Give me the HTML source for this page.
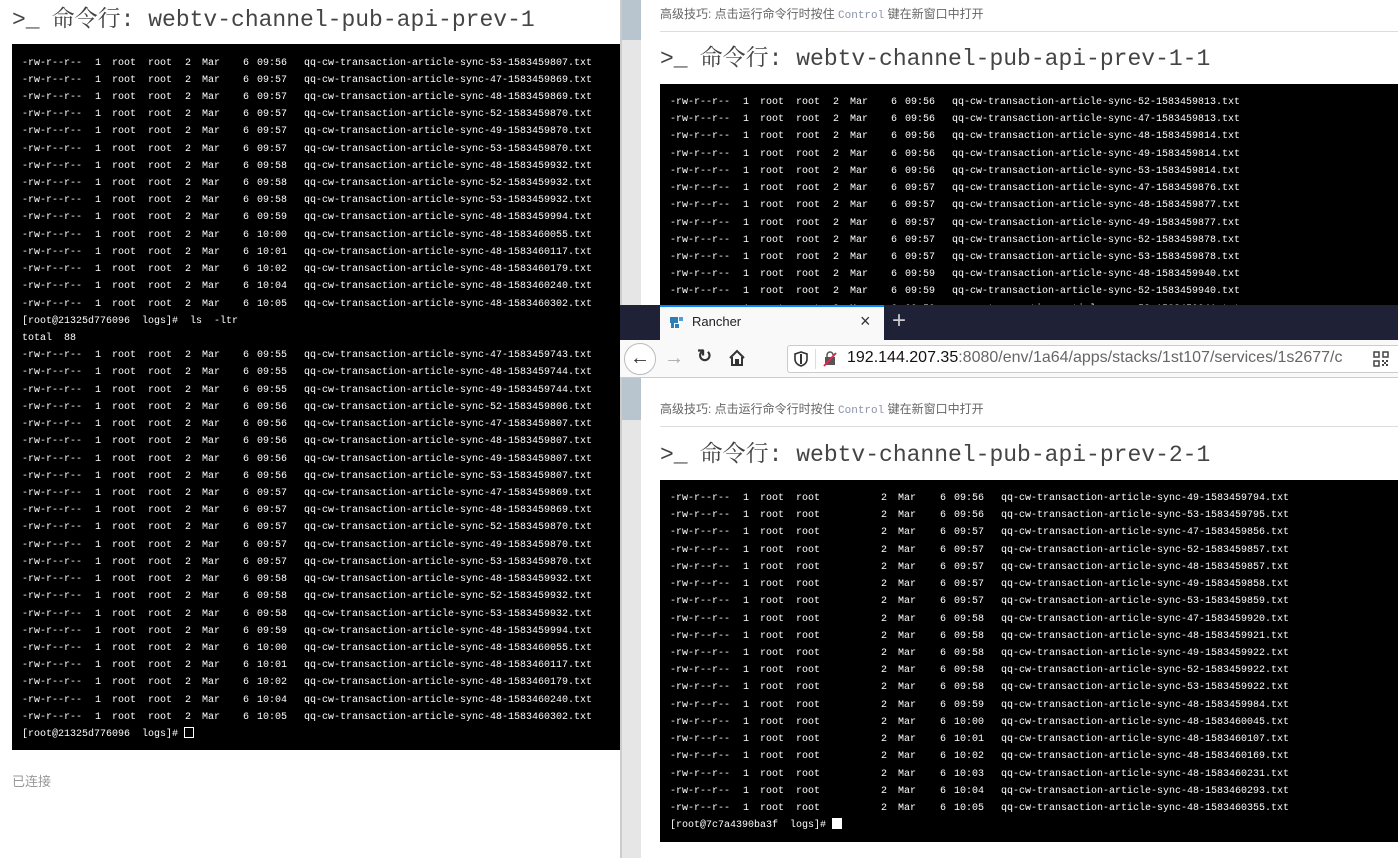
<!DOCTYPE html>
<html><head><meta charset="utf-8">
<style>
*{margin:0;padding:0;box-sizing:border-box}
body{width:1398px;height:858px;overflow:hidden;background:#fff;position:relative;font-family:"Liberation Sans","Noto Sans CJK SC",sans-serif}
.title{position:absolute;font-family:"Liberation Mono","Noto Serif CJK SC",monospace;font-size:23px;color:#444;white-space:nowrap;line-height:30px}
.title b{font-weight:normal;margin-right:12px}
.term{position:absolute;background:#000;overflow:hidden;color:#fff;font-family:"Liberation Mono",monospace;font-size:10px}
.r{position:relative;height:17.22px;line-height:17.22px;white-space:pre}
.r span{position:absolute;top:0}
.a{left:10px}.b{left:83px}.c{left:100px}.d{left:136px}.e{left:173px}.f{left:190px}.g{left:231px}.h{left:245px}.i{left:292px}
.w .e{left:221px}.w .f{left:238px}.w .g{left:280px}.w .h{left:294px}.w .i{left:341px}
.p{padding-left:10px}
.cur{display:inline-block;width:10px;height:11px;border:1px solid #fff;vertical-align:-2px;margin-left:6px}
.cur.f2{background:#fff}
.tip{position:absolute;font-size:12px;color:#666;white-space:nowrap}
.tip code{font-family:"Liberation Mono",monospace;color:#8a94a8;font-size:11px}
</style></head><body>

<!-- left window -->
<div class="title" style="left:12px;top:5px"><b>&gt;_</b>命令行: webtv-channel-pub-api-prev-1</div>
<div class="term" style="left:12px;top:44px;width:608px;height:706px;padding-top:10.5px">
<div class="r"><span class="a">-rw-r--r--</span><span class="b">1</span><span class="c">root</span><span class="d">root</span><span class="e">2</span><span class="f">Mar</span><span class="g">6</span><span class="h">09:56</span><span class="i">qq-cw-transaction-article-sync-53-1583459807.txt</span></div>
<div class="r"><span class="a">-rw-r--r--</span><span class="b">1</span><span class="c">root</span><span class="d">root</span><span class="e">2</span><span class="f">Mar</span><span class="g">6</span><span class="h">09:57</span><span class="i">qq-cw-transaction-article-sync-47-1583459869.txt</span></div>
<div class="r"><span class="a">-rw-r--r--</span><span class="b">1</span><span class="c">root</span><span class="d">root</span><span class="e">2</span><span class="f">Mar</span><span class="g">6</span><span class="h">09:57</span><span class="i">qq-cw-transaction-article-sync-48-1583459869.txt</span></div>
<div class="r"><span class="a">-rw-r--r--</span><span class="b">1</span><span class="c">root</span><span class="d">root</span><span class="e">2</span><span class="f">Mar</span><span class="g">6</span><span class="h">09:57</span><span class="i">qq-cw-transaction-article-sync-52-1583459870.txt</span></div>
<div class="r"><span class="a">-rw-r--r--</span><span class="b">1</span><span class="c">root</span><span class="d">root</span><span class="e">2</span><span class="f">Mar</span><span class="g">6</span><span class="h">09:57</span><span class="i">qq-cw-transaction-article-sync-49-1583459870.txt</span></div>
<div class="r"><span class="a">-rw-r--r--</span><span class="b">1</span><span class="c">root</span><span class="d">root</span><span class="e">2</span><span class="f">Mar</span><span class="g">6</span><span class="h">09:57</span><span class="i">qq-cw-transaction-article-sync-53-1583459870.txt</span></div>
<div class="r"><span class="a">-rw-r--r--</span><span class="b">1</span><span class="c">root</span><span class="d">root</span><span class="e">2</span><span class="f">Mar</span><span class="g">6</span><span class="h">09:58</span><span class="i">qq-cw-transaction-article-sync-48-1583459932.txt</span></div>
<div class="r"><span class="a">-rw-r--r--</span><span class="b">1</span><span class="c">root</span><span class="d">root</span><span class="e">2</span><span class="f">Mar</span><span class="g">6</span><span class="h">09:58</span><span class="i">qq-cw-transaction-article-sync-52-1583459932.txt</span></div>
<div class="r"><span class="a">-rw-r--r--</span><span class="b">1</span><span class="c">root</span><span class="d">root</span><span class="e">2</span><span class="f">Mar</span><span class="g">6</span><span class="h">09:58</span><span class="i">qq-cw-transaction-article-sync-53-1583459932.txt</span></div>
<div class="r"><span class="a">-rw-r--r--</span><span class="b">1</span><span class="c">root</span><span class="d">root</span><span class="e">2</span><span class="f">Mar</span><span class="g">6</span><span class="h">09:59</span><span class="i">qq-cw-transaction-article-sync-48-1583459994.txt</span></div>
<div class="r"><span class="a">-rw-r--r--</span><span class="b">1</span><span class="c">root</span><span class="d">root</span><span class="e">2</span><span class="f">Mar</span><span class="g">6</span><span class="h">10:00</span><span class="i">qq-cw-transaction-article-sync-48-1583460055.txt</span></div>
<div class="r"><span class="a">-rw-r--r--</span><span class="b">1</span><span class="c">root</span><span class="d">root</span><span class="e">2</span><span class="f">Mar</span><span class="g">6</span><span class="h">10:01</span><span class="i">qq-cw-transaction-article-sync-48-1583460117.txt</span></div>
<div class="r"><span class="a">-rw-r--r--</span><span class="b">1</span><span class="c">root</span><span class="d">root</span><span class="e">2</span><span class="f">Mar</span><span class="g">6</span><span class="h">10:02</span><span class="i">qq-cw-transaction-article-sync-48-1583460179.txt</span></div>
<div class="r"><span class="a">-rw-r--r--</span><span class="b">1</span><span class="c">root</span><span class="d">root</span><span class="e">2</span><span class="f">Mar</span><span class="g">6</span><span class="h">10:04</span><span class="i">qq-cw-transaction-article-sync-48-1583460240.txt</span></div>
<div class="r"><span class="a">-rw-r--r--</span><span class="b">1</span><span class="c">root</span><span class="d">root</span><span class="e">2</span><span class="f">Mar</span><span class="g">6</span><span class="h">10:05</span><span class="i">qq-cw-transaction-article-sync-48-1583460302.txt</span></div>
<div class="r p">[root@21325d776096  logs]#  ls  -ltr</div>
<div class="r p">total  88</div>
<div class="r"><span class="a">-rw-r--r--</span><span class="b">1</span><span class="c">root</span><span class="d">root</span><span class="e">2</span><span class="f">Mar</span><span class="g">6</span><span class="h">09:55</span><span class="i">qq-cw-transaction-article-sync-47-1583459743.txt</span></div>
<div class="r"><span class="a">-rw-r--r--</span><span class="b">1</span><span class="c">root</span><span class="d">root</span><span class="e">2</span><span class="f">Mar</span><span class="g">6</span><span class="h">09:55</span><span class="i">qq-cw-transaction-article-sync-48-1583459744.txt</span></div>
<div class="r"><span class="a">-rw-r--r--</span><span class="b">1</span><span class="c">root</span><span class="d">root</span><span class="e">2</span><span class="f">Mar</span><span class="g">6</span><span class="h">09:55</span><span class="i">qq-cw-transaction-article-sync-49-1583459744.txt</span></div>
<div class="r"><span class="a">-rw-r--r--</span><span class="b">1</span><span class="c">root</span><span class="d">root</span><span class="e">2</span><span class="f">Mar</span><span class="g">6</span><span class="h">09:56</span><span class="i">qq-cw-transaction-article-sync-52-1583459806.txt</span></div>
<div class="r"><span class="a">-rw-r--r--</span><span class="b">1</span><span class="c">root</span><span class="d">root</span><span class="e">2</span><span class="f">Mar</span><span class="g">6</span><span class="h">09:56</span><span class="i">qq-cw-transaction-article-sync-47-1583459807.txt</span></div>
<div class="r"><span class="a">-rw-r--r--</span><span class="b">1</span><span class="c">root</span><span class="d">root</span><span class="e">2</span><span class="f">Mar</span><span class="g">6</span><span class="h">09:56</span><span class="i">qq-cw-transaction-article-sync-48-1583459807.txt</span></div>
<div class="r"><span class="a">-rw-r--r--</span><span class="b">1</span><span class="c">root</span><span class="d">root</span><span class="e">2</span><span class="f">Mar</span><span class="g">6</span><span class="h">09:56</span><span class="i">qq-cw-transaction-article-sync-49-1583459807.txt</span></div>
<div class="r"><span class="a">-rw-r--r--</span><span class="b">1</span><span class="c">root</span><span class="d">root</span><span class="e">2</span><span class="f">Mar</span><span class="g">6</span><span class="h">09:56</span><span class="i">qq-cw-transaction-article-sync-53-1583459807.txt</span></div>
<div class="r"><span class="a">-rw-r--r--</span><span class="b">1</span><span class="c">root</span><span class="d">root</span><span class="e">2</span><span class="f">Mar</span><span class="g">6</span><span class="h">09:57</span><span class="i">qq-cw-transaction-article-sync-47-1583459869.txt</span></div>
<div class="r"><span class="a">-rw-r--r--</span><span class="b">1</span><span class="c">root</span><span class="d">root</span><span class="e">2</span><span class="f">Mar</span><span class="g">6</span><span class="h">09:57</span><span class="i">qq-cw-transaction-article-sync-48-1583459869.txt</span></div>
<div class="r"><span class="a">-rw-r--r--</span><span class="b">1</span><span class="c">root</span><span class="d">root</span><span class="e">2</span><span class="f">Mar</span><span class="g">6</span><span class="h">09:57</span><span class="i">qq-cw-transaction-article-sync-52-1583459870.txt</span></div>
<div class="r"><span class="a">-rw-r--r--</span><span class="b">1</span><span class="c">root</span><span class="d">root</span><span class="e">2</span><span class="f">Mar</span><span class="g">6</span><span class="h">09:57</span><span class="i">qq-cw-transaction-article-sync-49-1583459870.txt</span></div>
<div class="r"><span class="a">-rw-r--r--</span><span class="b">1</span><span class="c">root</span><span class="d">root</span><span class="e">2</span><span class="f">Mar</span><span class="g">6</span><span class="h">09:57</span><span class="i">qq-cw-transaction-article-sync-53-1583459870.txt</span></div>
<div class="r"><span class="a">-rw-r--r--</span><span class="b">1</span><span class="c">root</span><span class="d">root</span><span class="e">2</span><span class="f">Mar</span><span class="g">6</span><span class="h">09:58</span><span class="i">qq-cw-transaction-article-sync-48-1583459932.txt</span></div>
<div class="r"><span class="a">-rw-r--r--</span><span class="b">1</span><span class="c">root</span><span class="d">root</span><span class="e">2</span><span class="f">Mar</span><span class="g">6</span><span class="h">09:58</span><span class="i">qq-cw-transaction-article-sync-52-1583459932.txt</span></div>
<div class="r"><span class="a">-rw-r--r--</span><span class="b">1</span><span class="c">root</span><span class="d">root</span><span class="e">2</span><span class="f">Mar</span><span class="g">6</span><span class="h">09:58</span><span class="i">qq-cw-transaction-article-sync-53-1583459932.txt</span></div>
<div class="r"><span class="a">-rw-r--r--</span><span class="b">1</span><span class="c">root</span><span class="d">root</span><span class="e">2</span><span class="f">Mar</span><span class="g">6</span><span class="h">09:59</span><span class="i">qq-cw-transaction-article-sync-48-1583459994.txt</span></div>
<div class="r"><span class="a">-rw-r--r--</span><span class="b">1</span><span class="c">root</span><span class="d">root</span><span class="e">2</span><span class="f">Mar</span><span class="g">6</span><span class="h">10:00</span><span class="i">qq-cw-transaction-article-sync-48-1583460055.txt</span></div>
<div class="r"><span class="a">-rw-r--r--</span><span class="b">1</span><span class="c">root</span><span class="d">root</span><span class="e">2</span><span class="f">Mar</span><span class="g">6</span><span class="h">10:01</span><span class="i">qq-cw-transaction-article-sync-48-1583460117.txt</span></div>
<div class="r"><span class="a">-rw-r--r--</span><span class="b">1</span><span class="c">root</span><span class="d">root</span><span class="e">2</span><span class="f">Mar</span><span class="g">6</span><span class="h">10:02</span><span class="i">qq-cw-transaction-article-sync-48-1583460179.txt</span></div>
<div class="r"><span class="a">-rw-r--r--</span><span class="b">1</span><span class="c">root</span><span class="d">root</span><span class="e">2</span><span class="f">Mar</span><span class="g">6</span><span class="h">10:04</span><span class="i">qq-cw-transaction-article-sync-48-1583460240.txt</span></div>
<div class="r"><span class="a">-rw-r--r--</span><span class="b">1</span><span class="c">root</span><span class="d">root</span><span class="e">2</span><span class="f">Mar</span><span class="g">6</span><span class="h">10:05</span><span class="i">qq-cw-transaction-article-sync-48-1583460302.txt</span></div>
<div class="r p">[root@21325d776096  logs]#<span class="cur" style="position:static"></span></div>
</div>
<div class="tip" style="left:12px;top:771px;font-size:13px;color:#999">已连接</div>

<!-- right side window base -->
<div style="position:absolute;left:620px;top:0;width:2px;height:858px;background:#ccc"></div>
<div style="position:absolute;left:622px;top:0;width:19px;height:858px;background:#e6e6e6"></div>
<div style="position:absolute;left:622px;top:0;width:19px;height:40px;background:#b8c5cf"></div>

<!-- right upper -->
<div class="tip" style="left:660px;top:5px">高级技巧: 点击运行命令行时按住 <code>Control</code> 键在新窗口中打开</div>
<div style="position:absolute;left:660px;top:31px;width:738px;height:1px;background:#ddd"></div>
<div class="title" style="left:660px;top:44px"><b>&gt;_</b>命令行: webtv-channel-pub-api-prev-1-1</div>
<div class="term" style="left:660px;top:84px;width:738px;height:221px;padding-top:10px">
<div class="r"><span class="a">-rw-r--r--</span><span class="b">1</span><span class="c">root</span><span class="d">root</span><span class="e">2</span><span class="f">Mar</span><span class="g">6</span><span class="h">09:56</span><span class="i">qq-cw-transaction-article-sync-52-1583459813.txt</span></div>
<div class="r"><span class="a">-rw-r--r--</span><span class="b">1</span><span class="c">root</span><span class="d">root</span><span class="e">2</span><span class="f">Mar</span><span class="g">6</span><span class="h">09:56</span><span class="i">qq-cw-transaction-article-sync-47-1583459813.txt</span></div>
<div class="r"><span class="a">-rw-r--r--</span><span class="b">1</span><span class="c">root</span><span class="d">root</span><span class="e">2</span><span class="f">Mar</span><span class="g">6</span><span class="h">09:56</span><span class="i">qq-cw-transaction-article-sync-48-1583459814.txt</span></div>
<div class="r"><span class="a">-rw-r--r--</span><span class="b">1</span><span class="c">root</span><span class="d">root</span><span class="e">2</span><span class="f">Mar</span><span class="g">6</span><span class="h">09:56</span><span class="i">qq-cw-transaction-article-sync-49-1583459814.txt</span></div>
<div class="r"><span class="a">-rw-r--r--</span><span class="b">1</span><span class="c">root</span><span class="d">root</span><span class="e">2</span><span class="f">Mar</span><span class="g">6</span><span class="h">09:56</span><span class="i">qq-cw-transaction-article-sync-53-1583459814.txt</span></div>
<div class="r"><span class="a">-rw-r--r--</span><span class="b">1</span><span class="c">root</span><span class="d">root</span><span class="e">2</span><span class="f">Mar</span><span class="g">6</span><span class="h">09:57</span><span class="i">qq-cw-transaction-article-sync-47-1583459876.txt</span></div>
<div class="r"><span class="a">-rw-r--r--</span><span class="b">1</span><span class="c">root</span><span class="d">root</span><span class="e">2</span><span class="f">Mar</span><span class="g">6</span><span class="h">09:57</span><span class="i">qq-cw-transaction-article-sync-48-1583459877.txt</span></div>
<div class="r"><span class="a">-rw-r--r--</span><span class="b">1</span><span class="c">root</span><span class="d">root</span><span class="e">2</span><span class="f">Mar</span><span class="g">6</span><span class="h">09:57</span><span class="i">qq-cw-transaction-article-sync-49-1583459877.txt</span></div>
<div class="r"><span class="a">-rw-r--r--</span><span class="b">1</span><span class="c">root</span><span class="d">root</span><span class="e">2</span><span class="f">Mar</span><span class="g">6</span><span class="h">09:57</span><span class="i">qq-cw-transaction-article-sync-52-1583459878.txt</span></div>
<div class="r"><span class="a">-rw-r--r--</span><span class="b">1</span><span class="c">root</span><span class="d">root</span><span class="e">2</span><span class="f">Mar</span><span class="g">6</span><span class="h">09:57</span><span class="i">qq-cw-transaction-article-sync-53-1583459878.txt</span></div>
<div class="r"><span class="a">-rw-r--r--</span><span class="b">1</span><span class="c">root</span><span class="d">root</span><span class="e">2</span><span class="f">Mar</span><span class="g">6</span><span class="h">09:59</span><span class="i">qq-cw-transaction-article-sync-48-1583459940.txt</span></div>
<div class="r"><span class="a">-rw-r--r--</span><span class="b">1</span><span class="c">root</span><span class="d">root</span><span class="e">2</span><span class="f">Mar</span><span class="g">6</span><span class="h">09:59</span><span class="i">qq-cw-transaction-article-sync-52-1583459940.txt</span></div>
<div class="r"><span class="a">-rw-r--r--</span><span class="b">1</span><span class="c">root</span><span class="d">root</span><span class="e">2</span><span class="f">Mar</span><span class="g">6</span><span class="h">09:59</span><span class="i">qq-cw-transaction-article-sync-53-1583459941.txt</span></div>
</div>

<!-- browser chrome -->
<div style="position:absolute;left:620px;top:305px;width:778px;height:35px;background:#1f2236"></div>
<div style="position:absolute;left:660px;top:305px;width:224px;height:35px;background:#f9f9fa;border-top:2px solid #0a84ff"></div>
<svg style="position:absolute;left:668px;top:314px" width="18" height="18" viewBox="0 0 18 18"><path d="M2 3h8v6H6v5H3V9H2z" fill="#2d7db8"/><path d="M11 3h4v4h-4z" fill="#4a9fd8"/><path d="M7 10h4v4H7z" fill="#2d7db8"/></svg>
<div style="position:absolute;left:692px;top:314px;font-size:13px;color:#222">Rancher</div>
<div style="position:absolute;left:860px;top:310px;font-size:18px;color:#333;line-height:22px">×</div>
<div style="position:absolute;left:892px;top:307px;font-size:24px;color:#ccc;line-height:28px">+</div>
<div style="position:absolute;left:620px;top:340px;width:778px;height:38px;background:#f9f9fa;border-bottom:1px solid #ccc"></div>
<div style="position:absolute;left:624px;top:343px;width:32px;height:32px;border:1px solid #bbb;border-radius:50%;background:#fff;font-size:20px;line-height:28px;text-align:center;color:#333">←</div>
<div style="position:absolute;left:664px;top:347px;font-size:20px;color:#aaa">→</div>
<div style="position:absolute;left:697px;top:346px;font-size:18px;color:#333;font-weight:bold">↻</div>
<svg style="position:absolute;left:728px;top:349px" width="18" height="18" viewBox="0 0 18 18"><path d="M2 9L9 2l7 7M4 8v8h4v-5h2v5h4V8" fill="none" stroke="#333" stroke-width="2"/></svg>
<div style="position:absolute;left:787px;top:345px;width:611px;height:28px;background:#fff;border:1px solid #ccc;border-right:none;border-radius:3px 0 0 3px"></div>
<svg style="position:absolute;left:794px;top:351px" width="14" height="16" viewBox="0 0 14 16"><path d="M7 1L1 3v5c0 4 3 6 6 7 3-1 6-3 6-7V3z" fill="none" stroke="#333" stroke-width="1.6"/><path d="M7 3v10" stroke="#333" stroke-width="2"/></svg>
<div style="position:absolute;left:815px;top:349px;width:1px;height:20px;background:#ddd"></div>
<svg style="position:absolute;left:822px;top:351px" width="16" height="16" viewBox="0 0 16 16"><path d="M3 6h10v8H3z" fill="#555"/><path d="M5 6V4a3 3 0 016 0" fill="none" stroke="#555" stroke-width="1.5"/><path d="M2 15L14 2" stroke="#e22850" stroke-width="2"/></svg>
<div style="position:absolute;left:847px;top:349px;font-size:16px;color:#111;white-space:nowrap;width:496px;overflow:hidden">192.144.207.35<span style="color:#666">:8080/env/1a64/apps/stacks/1st107/services/1s2677/contain</span></div>
<svg style="position:absolute;left:1373px;top:351px" width="16" height="16" viewBox="0 0 16 16"><path d="M1 1h5v5H1zM10 1h5v5h-5zM1 10h5v5H1z" fill="none" stroke="#444" stroke-width="1.5"/><path d="M9 9h2v2H9zM13 9h2v2h-2zM11 11h2v2h-2zM9 13h2v2H9zM13 13h2v2h-2z" fill="#444"/></svg>

<!-- right lower -->
<div style="position:absolute;left:622px;top:378px;width:19px;height:42px;background:#b8c5cf"></div>
<div class="tip" style="left:660px;top:400px">高级技巧: 点击运行命令行时按住 <code>Control</code> 键在新窗口中打开</div>
<div style="position:absolute;left:660px;top:426px;width:738px;height:1px;background:#ddd"></div>
<div class="title" style="left:660px;top:440px"><b>&gt;_</b>命令行: webtv-channel-pub-api-prev-2-1</div>
<div class="term w" style="left:660px;top:480px;width:738px;height:362px;padding-top:10px">
<div class="r"><span class="a">-rw-r--r--</span><span class="b">1</span><span class="c">root</span><span class="d">root</span><span class="e">2</span><span class="f">Mar</span><span class="g">6</span><span class="h">09:56</span><span class="i">qq-cw-transaction-article-sync-49-1583459794.txt</span></div>
<div class="r"><span class="a">-rw-r--r--</span><span class="b">1</span><span class="c">root</span><span class="d">root</span><span class="e">2</span><span class="f">Mar</span><span class="g">6</span><span class="h">09:56</span><span class="i">qq-cw-transaction-article-sync-53-1583459795.txt</span></div>
<div class="r"><span class="a">-rw-r--r--</span><span class="b">1</span><span class="c">root</span><span class="d">root</span><span class="e">2</span><span class="f">Mar</span><span class="g">6</span><span class="h">09:57</span><span class="i">qq-cw-transaction-article-sync-47-1583459856.txt</span></div>
<div class="r"><span class="a">-rw-r--r--</span><span class="b">1</span><span class="c">root</span><span class="d">root</span><span class="e">2</span><span class="f">Mar</span><span class="g">6</span><span class="h">09:57</span><span class="i">qq-cw-transaction-article-sync-52-1583459857.txt</span></div>
<div class="r"><span class="a">-rw-r--r--</span><span class="b">1</span><span class="c">root</span><span class="d">root</span><span class="e">2</span><span class="f">Mar</span><span class="g">6</span><span class="h">09:57</span><span class="i">qq-cw-transaction-article-sync-48-1583459857.txt</span></div>
<div class="r"><span class="a">-rw-r--r--</span><span class="b">1</span><span class="c">root</span><span class="d">root</span><span class="e">2</span><span class="f">Mar</span><span class="g">6</span><span class="h">09:57</span><span class="i">qq-cw-transaction-article-sync-49-1583459858.txt</span></div>
<div class="r"><span class="a">-rw-r--r--</span><span class="b">1</span><span class="c">root</span><span class="d">root</span><span class="e">2</span><span class="f">Mar</span><span class="g">6</span><span class="h">09:57</span><span class="i">qq-cw-transaction-article-sync-53-1583459859.txt</span></div>
<div class="r"><span class="a">-rw-r--r--</span><span class="b">1</span><span class="c">root</span><span class="d">root</span><span class="e">2</span><span class="f">Mar</span><span class="g">6</span><span class="h">09:58</span><span class="i">qq-cw-transaction-article-sync-47-1583459920.txt</span></div>
<div class="r"><span class="a">-rw-r--r--</span><span class="b">1</span><span class="c">root</span><span class="d">root</span><span class="e">2</span><span class="f">Mar</span><span class="g">6</span><span class="h">09:58</span><span class="i">qq-cw-transaction-article-sync-48-1583459921.txt</span></div>
<div class="r"><span class="a">-rw-r--r--</span><span class="b">1</span><span class="c">root</span><span class="d">root</span><span class="e">2</span><span class="f">Mar</span><span class="g">6</span><span class="h">09:58</span><span class="i">qq-cw-transaction-article-sync-49-1583459922.txt</span></div>
<div class="r"><span class="a">-rw-r--r--</span><span class="b">1</span><span class="c">root</span><span class="d">root</span><span class="e">2</span><span class="f">Mar</span><span class="g">6</span><span class="h">09:58</span><span class="i">qq-cw-transaction-article-sync-52-1583459922.txt</span></div>
<div class="r"><span class="a">-rw-r--r--</span><span class="b">1</span><span class="c">root</span><span class="d">root</span><span class="e">2</span><span class="f">Mar</span><span class="g">6</span><span class="h">09:58</span><span class="i">qq-cw-transaction-article-sync-53-1583459922.txt</span></div>
<div class="r"><span class="a">-rw-r--r--</span><span class="b">1</span><span class="c">root</span><span class="d">root</span><span class="e">2</span><span class="f">Mar</span><span class="g">6</span><span class="h">09:59</span><span class="i">qq-cw-transaction-article-sync-48-1583459984.txt</span></div>
<div class="r"><span class="a">-rw-r--r--</span><span class="b">1</span><span class="c">root</span><span class="d">root</span><span class="e">2</span><span class="f">Mar</span><span class="g">6</span><span class="h">10:00</span><span class="i">qq-cw-transaction-article-sync-48-1583460045.txt</span></div>
<div class="r"><span class="a">-rw-r--r--</span><span class="b">1</span><span class="c">root</span><span class="d">root</span><span class="e">2</span><span class="f">Mar</span><span class="g">6</span><span class="h">10:01</span><span class="i">qq-cw-transaction-article-sync-48-1583460107.txt</span></div>
<div class="r"><span class="a">-rw-r--r--</span><span class="b">1</span><span class="c">root</span><span class="d">root</span><span class="e">2</span><span class="f">Mar</span><span class="g">6</span><span class="h">10:02</span><span class="i">qq-cw-transaction-article-sync-48-1583460169.txt</span></div>
<div class="r"><span class="a">-rw-r--r--</span><span class="b">1</span><span class="c">root</span><span class="d">root</span><span class="e">2</span><span class="f">Mar</span><span class="g">6</span><span class="h">10:03</span><span class="i">qq-cw-transaction-article-sync-48-1583460231.txt</span></div>
<div class="r"><span class="a">-rw-r--r--</span><span class="b">1</span><span class="c">root</span><span class="d">root</span><span class="e">2</span><span class="f">Mar</span><span class="g">6</span><span class="h">10:04</span><span class="i">qq-cw-transaction-article-sync-48-1583460293.txt</span></div>
<div class="r"><span class="a">-rw-r--r--</span><span class="b">1</span><span class="c">root</span><span class="d">root</span><span class="e">2</span><span class="f">Mar</span><span class="g">6</span><span class="h">10:05</span><span class="i">qq-cw-transaction-article-sync-48-1583460355.txt</span></div>
<div class="r p">[root@7c7a4390ba3f  logs]#<span class="cur f2" style="position:static"></span></div>
</div>
</body></html>
